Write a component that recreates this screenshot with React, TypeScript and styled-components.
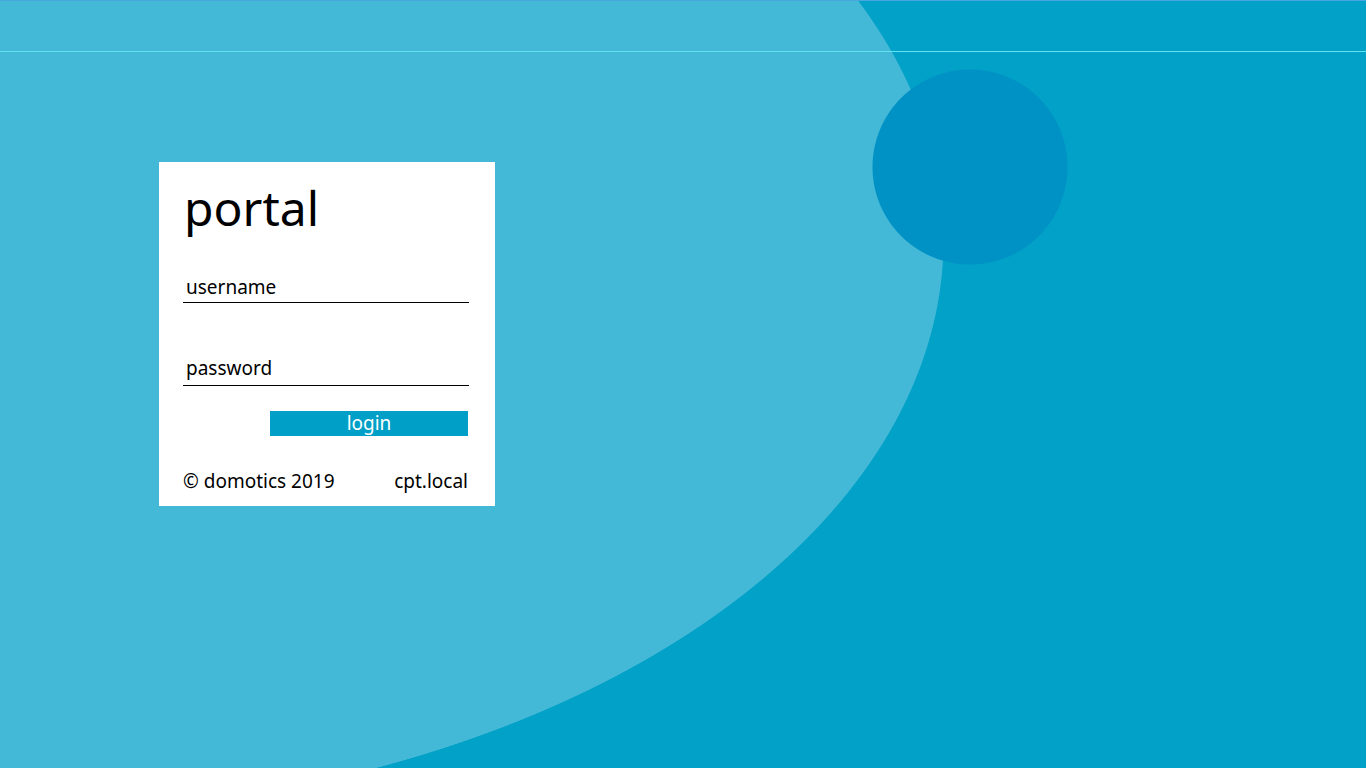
import React from 'react';
import styled, { createGlobalStyle } from 'styled-components';

const GlobalStyle = createGlobalStyle`
  html, body {
    margin: 0;
    padding: 0;
  }
  body {
    font-family: 'Noto Sans', 'Open Sans', sans-serif;
  }
`;

// the big pale ellipse and the dark disc are painted as backgrounds
const Page = styled.div`
  width: 100vw;
  height: 100vh;
  overflow: hidden;
  background:
    radial-gradient(circle 98px at 970px 167px, #0091c5 calc(100% - 1px), transparent 100%),
    radial-gradient(944px 576px at 0px 240px, #43b9d7 calc(100% - 1px), transparent 100%),
    #01a1c8;
`;

const TopBar = styled.header`
  height: 50px;
  border-top: 1px solid #4aa6df;
  border-bottom: 1px solid #5fe3f3;
`;

const Content = styled.main`
  padding: 110px 0 0 159px;
`;

const Card = styled.form`
  box-sizing: border-box;
  width: 336px;
  height: 344px;
  background: #fff;
  padding: 14px 26px 0 24px;
  display: flex;
  flex-direction: column;
`;

const Title = styled.h1`
  margin: 0 0 0 1px;
  font-weight: 400;
  font-size: 48px;
  line-height: 64px;
  color: #000;
`;

const Field = styled.input`
  box-sizing: border-box;
  width: 100%;
  height: 32px;
  margin-top: ${props => props.$gap}px;
  padding: ${props => props.$lift}px 3px 4px;
  border: none;
  border-bottom: 1px solid #000;
  outline: none;
  font-family: inherit;
  font-size: 19px;
  color: #000;
  &::placeholder {
    color: #000;
    opacity: 1;
  }
`;

const LoginButton = styled.button`
  align-self: flex-end;
  width: 198px;
  height: 25px;
  margin-top: 25px;
  margin-right: 1px;
  padding: 0;
  border: none;
  background: #009fc8;
  color: #fff;
  font-family: inherit;
  font-size: 19px;
  line-height: 25px;
  cursor: pointer;
`;

const Footer = styled.div`
  display: flex;
  justify-content: space-between;
  margin-top: 32px;
  padding-right: 1px;
  font-size: 19px;
  color: #000;
`;

const App = () => {
  return (
    <Page>
      <GlobalStyle />
      <TopBar />
      <Content>
        <Card onSubmit={e => e.preventDefault()}>
          <Title>portal</Title>
          <Field type='text' placeholder='username' $gap={31} $lift={4} />
          <Field type='password' placeholder='password' $gap={51} $lift={0} />
          <LoginButton type='submit'>login</LoginButton>
          <Footer>
            <span>© domotics 2019</span>
            <span>cpt.local</span>
          </Footer>
        </Card>
      </Content>
    </Page>
  );
};

export default App;
